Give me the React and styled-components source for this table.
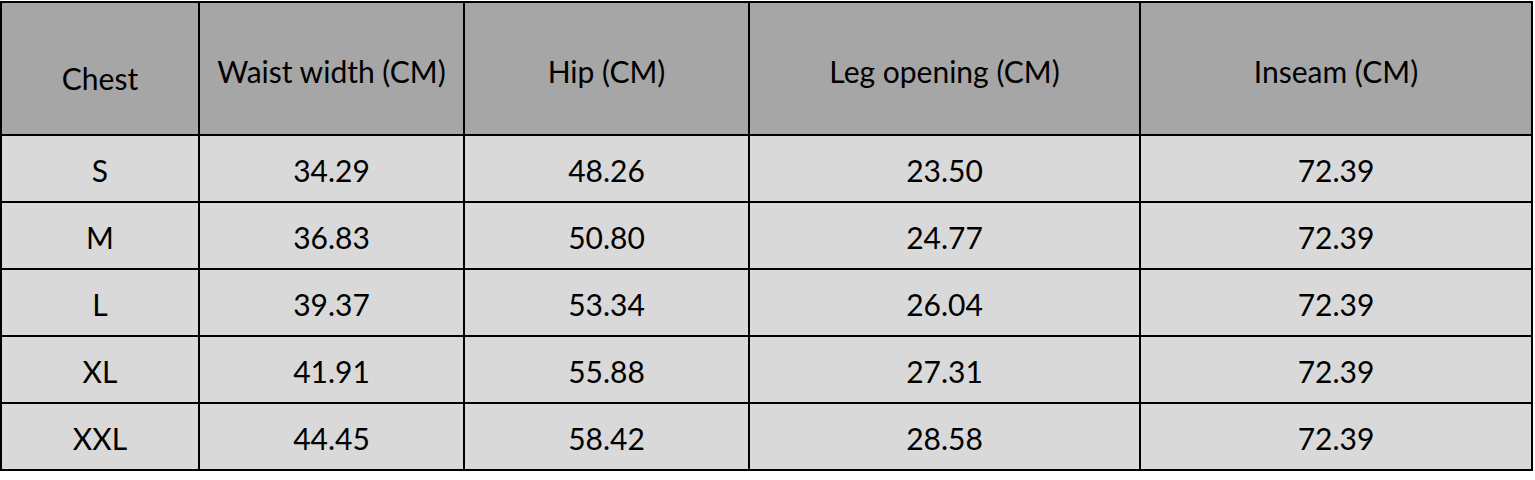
import styled, { createGlobalStyle } from "styled-components";

const GlobalStyle = createGlobalStyle`
  body {
    margin: 0;
    background: #ffffff;
    font-family: "Lato", "Open Sans", sans-serif;
  }
`;

const columns = [
  { label: "Chest", width: 196, drop: 19 },
  { label: "Waist width (CM)", width: 263, drop: 5 },
  { label: "Hip (CM)", width: 283, drop: 5 },
  { label: "Leg opening (CM)", width: 389, drop: 5 },
  { label: "Inseam (CM)", width: 390, drop: 5 },
];

const rows = [
  ["S", "34.29", "48.26", "23.50", "72.39"],
  ["M", "36.83", "50.80", "24.77", "72.39"],
  ["L", "39.37", "53.34", "26.04", "72.39"],
  ["XL", "41.91", "55.88", "27.31", "72.39"],
  ["XXL", "44.45", "58.42", "28.58", "72.39"],
];

export default function App() {
  return (
    <>
      <GlobalStyle />
      <SizeTable>
        {columns.map((c) => (
          <HeadCell key={c.label} $drop={c.drop}>
            {c.label}
          </HeadCell>
        ))}
        {rows.map((r) =>
          r.map((v, i) => <Cell key={r[0] + i}>{v}</Cell>)
        )}
      </SizeTable>
    </>
  );
}

const SizeTable = styled.div`
  display: grid;
  grid-template-columns: ${columns.map((c) => c.width + "px").join(" ")};
  grid-template-rows: 131px repeat(5, 65px);
  gap: 2px;
  padding: 2px;
  margin-top: 1px;
  width: max-content;
  background: #000000;
`;

const HeadCell = styled.div`
  display: flex;
  align-items: center;
  justify-content: center;
  padding-top: ${(p) => p.$drop}px;
  background: #a6a6a6;
  color: #000000;
  font-size: 30px;
`;

const Cell = styled.div`
  display: flex;
  align-items: center;
  justify-content: center;
  padding-top: 3px;
  background: #d9d9d9;
  color: #000000;
  font-size: 30px;
`;
